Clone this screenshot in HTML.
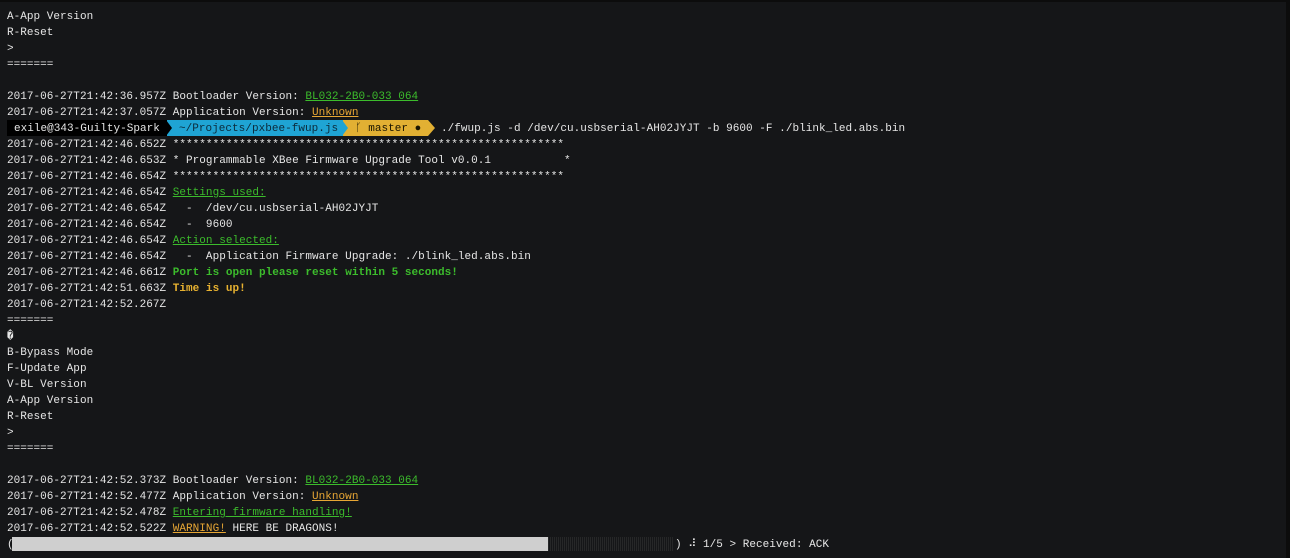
<!DOCTYPE html>
<html><head><meta charset="utf-8"><style>
html,body{margin:0;padding:0;}
body{width:1290px;height:558px;background:#0c0c0c;overflow:hidden;position:relative;font-family:"Liberation Mono",monospace;}
#t{position:absolute;left:0;top:2px;width:1286px;height:556px;background:#151618;}
.l{position:absolute;left:7px;height:16px;line-height:16px;font-size:11px;color:#e6e6e6;white-space:pre;letter-spacing:0.03px;margin-top:1px;}
.g{color:#3cbc2c;text-decoration:underline;}
.o{color:#e7a634;text-decoration:underline;}
.gb{color:#3cbc2c;font-weight:bold;}
.ob{color:#e8b230;font-weight:bold;}
</style></head><body><div id="t"></div>
<div class="l" style="top:8px">A-App Version</div>
<div class="l" style="top:24px">R-Reset</div>
<div class="l" style="top:40px">&gt;</div>
<div class="l" style="top:56px">=======</div>
<div class="l" style="top:88px">2017-06-27T21:42:36.957Z Bootloader Version: <span class="g">BL032-2B0-033 064</span></div>
<div class="l" style="top:104px">2017-06-27T21:42:37.057Z Application Version: <span class="o">Unknown</span></div>
<div style="position:absolute;top:120px;left:7px;height:16px;width:160px;background:#000"></div>
<div style="position:absolute;top:120px;left:167px;height:16px;width:176px;background:#1fa4d4"></div>
<svg style="position:absolute;top:120px;left:166px" width="6" height="16"><polygon points="0,0 6,8 0,16" fill="#000"/></svg>
<div style="position:absolute;top:120px;left:343px;height:16px;width:85px;background:#e2b033"></div>
<svg style="position:absolute;top:120px;left:342px" width="6" height="16"><polygon points="0,0 6,8 0,16" fill="#1fa4d4"/></svg>
<svg style="position:absolute;top:120px;left:428px" width="7" height="16"><polygon points="0,0 7,8 0,16" fill="#e2b033"/></svg>
<div class="l" style="top:120px;left:14px;color:#e6e6e6">exile@343-Guilty-Spark</div>
<div class="l" style="top:120px;left:179px;color:#0c2a3a">~/Projects/pxbee-fwup.js</div>
<div class="l" style="top:120px;left:355px;color:#1a1400">ᚴ master ●</div>
<div class="l" style="top:120px;left:441px">./fwup.js -d /dev/cu.usbserial-AH02JYJT -b 9600 -F ./blink_led.abs.bin</div>
<div class="l" style="top:136px">2017-06-27T21:42:46.652Z ***********************************************************</div>
<div class="l" style="top:152px">2017-06-27T21:42:46.653Z * Programmable XBee Firmware Upgrade Tool v0.0.1           *</div>
<div class="l" style="top:168px">2017-06-27T21:42:46.654Z ***********************************************************</div>
<div class="l" style="top:184px">2017-06-27T21:42:46.654Z <span class="g">Settings used:</span></div>
<div class="l" style="top:200px">2017-06-27T21:42:46.654Z   -  /dev/cu.usbserial-AH02JYJT</div>
<div class="l" style="top:216px">2017-06-27T21:42:46.654Z   -  9600</div>
<div class="l" style="top:232px">2017-06-27T21:42:46.654Z <span class="g">Action selected:</span></div>
<div class="l" style="top:248px">2017-06-27T21:42:46.654Z   -  Application Firmware Upgrade: ./blink_led.abs.bin</div>
<div class="l" style="top:264px">2017-06-27T21:42:46.661Z <span class="gb">Port is open please reset within 5 seconds!</span></div>
<div class="l" style="top:280px">2017-06-27T21:42:51.663Z <span class="ob">Time is up!</span></div>
<div class="l" style="top:296px">2017-06-27T21:42:52.267Z</div>
<div class="l" style="top:312px">=======</div>
<div class="l" style="top:328px">�</div>
<div class="l" style="top:344px">B-Bypass Mode</div>
<div class="l" style="top:360px">F-Update App</div>
<div class="l" style="top:376px">V-BL Version</div>
<div class="l" style="top:392px">A-App Version</div>
<div class="l" style="top:408px">R-Reset</div>
<div class="l" style="top:424px">&gt;</div>
<div class="l" style="top:440px">=======</div>
<div class="l" style="top:472px">2017-06-27T21:42:52.373Z Bootloader Version: <span class="g">BL032-2B0-033 064</span></div>
<div class="l" style="top:488px">2017-06-27T21:42:52.477Z Application Version: <span class="o">Unknown</span></div>
<div class="l" style="top:504px">2017-06-27T21:42:52.478Z <span class="g">Entering firmware handling!</span></div>
<div class="l" style="top:520px">2017-06-27T21:42:52.522Z <span class="o">WARNING!</span> HERE BE DRAGONS!</div>
<div class="l" style="top:536px">(</div>
<div style="position:absolute;top:537px;left:12px;width:536px;height:14px;background:#cfcfcf"></div>
<div style="position:absolute;top:537px;left:548px;width:126px;height:14px;background:repeating-linear-gradient(90deg,#262728 0 1px,#151618 1px 2px)"></div>
<div class="l" style="top:536px;left:675px">) ⠼ 1/5 &gt; Received: ACK</div>
</body></html>
